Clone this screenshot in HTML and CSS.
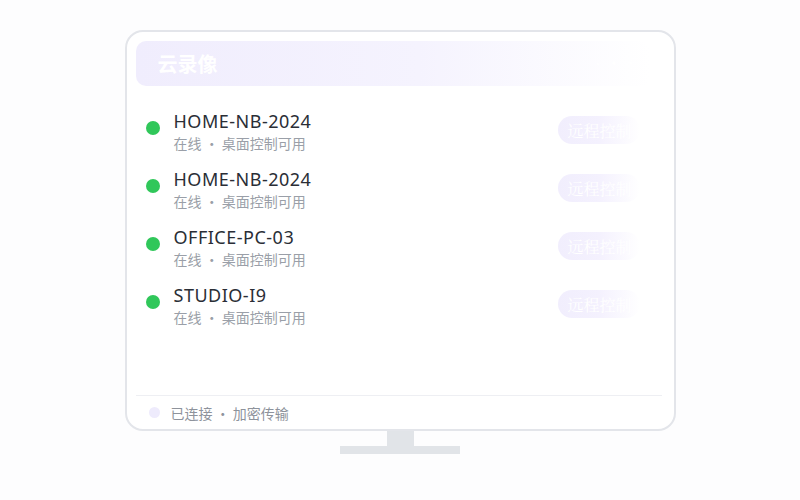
FILE: index.html
```html
<!DOCTYPE html>
<html lang="zh-CN">
<head>
    <meta charset="UTF-8">
    <meta name="viewport" content="width=device-width, initial-scale=1.0">
    <title>云录像</title>
    <link rel="stylesheet" href="styles.css">
</head>
<body>
    <!-- Monitor -->
    <div class="monitor">
        <div class="screen">
            <div class="screen-header">
                <h2>云录像</h2>
                <span class="header-dots">· • •</span>
            </div>

            <ul class="device-list">
                <li class="device">
                    <span class="status-dot"></span>
                    <div class="device-info">
                        <div class="device-name">HOME-NB-2024</div>
                        <div class="device-sub">在线 · 桌面控制可用</div>
                    </div>
                    <button class="remote-btn">远程控制</button>
                </li>
                <li class="device">
                    <span class="status-dot"></span>
                    <div class="device-info">
                        <div class="device-name">HOME-NB-2024</div>
                        <div class="device-sub">在线 · 桌面控制可用</div>
                    </div>
                    <button class="remote-btn">远程控制</button>
                </li>
                <li class="device">
                    <span class="status-dot"></span>
                    <div class="device-info">
                        <div class="device-name">OFFICE-PC-03</div>
                        <div class="device-sub">在线 · 桌面控制可用</div>
                    </div>
                    <button class="remote-btn">远程控制</button>
                </li>
                <li class="device">
                    <span class="status-dot"></span>
                    <div class="device-info">
                        <div class="device-name">STUDIO-I9</div>
                        <div class="device-sub">在线 · 桌面控制可用</div>
                    </div>
                    <button class="remote-btn">远程控制</button>
                </li>
            </ul>

            <div class="screen-footer">
                <span class="footer-dot"></span>
                <span>已连接 · 加密传输</span>
            </div>
        </div>
        <div class="neck"></div>
        <div class="base"></div>
    </div>
</body>
</html>
```

FILE: styles.css
```css
* {
    margin: 0;
    padding: 0;
    box-sizing: border-box;
}

body {
    font-family: "Noto Sans", "Noto Sans CJK SC", sans-serif;
    background: #fdfdfe;
    width: 800px;
    height: 500px;
    overflow: hidden;
}

/* Monitor frame */
.monitor {
    display: flex;
    flex-direction: column;
    align-items: center;
    padding-top: 30px;
}

.screen {
    width: 551px;
    height: 401px;
    border: 2px solid #e3e5ea;
    border-radius: 18px;
    background: #fff;
    padding: 9px 10px 0 9px;
    display: flex;
    flex-direction: column;
}

.screen-header {
    height: 45px;
    border-radius: 10px;
    background: linear-gradient(90deg, #f0edfd 0%, #f5f3fe 55%, #ffffff 100%);
    display: flex;
    align-items: center;
    justify-content: space-between;
    padding: 0 22px;
    margin-right: 14px;
}

.screen-header h2 {
    font-family: "Noto Sans CJK SC", sans-serif;
    font-size: 20px;
    font-weight: bold;
    color: #fff;
}

.header-dots {
    color: #fff;
    font-size: 14px;
    letter-spacing: 4px;
    margin-right: -10px;
}

.device-list {
    list-style: none;
    padding-top: 23px;
    flex: 1;
}

.device {
    display: flex;
    align-items: flex-start;
    height: 58px;
    padding-left: 10px;
}

.status-dot {
    width: 14px;
    height: 14px;
    border-radius: 50%;
    background: #30c75a;
    margin-top: 12px;
    margin-right: 14px;
}

.device-info {
    width: 384px;
}

.device-name {
    font-size: 18px;
    line-height: 24px;
    letter-spacing: 0.5px;
    color: #2a2e36;
}

.device-sub {
    font-family: "Noto Sans CJK SC", sans-serif;
    font-size: 14px;
    line-height: 20px;
    color: #9a9fa8;
}

.remote-btn {
    margin-top: 7px;
    width: 82px;
    height: 28px;
    border: none;
    border-radius: 14px;
    background: linear-gradient(90deg, #f1eefd 0%, #f4f1fe 50%, #ffffff 100%);
    color: #fff;
    font-family: "Noto Serif CJK SC", "Liberation Serif", serif;
    font-size: 16px;
    text-align: left;
    padding-left: 10px;
    white-space: nowrap;
    overflow: hidden;
}

.screen-footer {
    height: 34px;
    border-top: 1px solid #eeeff3;
    margin-right: 2px;
    display: flex;
    align-items: center;
    padding-left: 13px;
    font-family: "Noto Sans CJK SC", sans-serif;
    font-size: 14px;
    color: #8e939c;
}

.footer-dot {
    width: 11px;
    height: 11px;
    border-radius: 50%;
    background: #eeebfc;
    margin-right: 11px;
}

.neck {
    width: 27px;
    height: 15px;
    background: #e1e4e8;
}

.base {
    width: 120px;
    height: 8px;
    background: #e1e4e8;
}
```
